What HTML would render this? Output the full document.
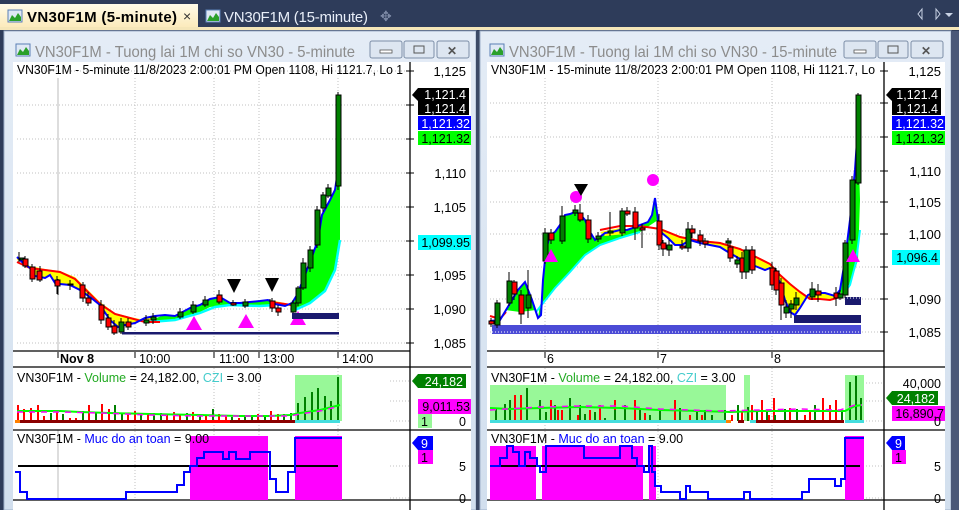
<!DOCTYPE html>
<html><head><meta charset="utf-8"><style>
html,body{margin:0;padding:0;width:959px;height:510px;overflow:hidden;background:#2e3c5a;}
svg{position:absolute;left:0;top:0;font-family:"Liberation Sans",sans-serif;}
</style></head><body>
<svg width="959" height="510" viewBox="0 0 959 510" xmlns="http://www.w3.org/2000/svg">
<defs>
<linearGradient id="tab" x1="0" y1="0" x2="0" y2="1"><stop offset="0" stop-color="#fffbe8"/><stop offset="1" stop-color="#fbe9b8"/></linearGradient>
<linearGradient id="frm" x1="0" y1="0" x2="0" y2="1"><stop offset="0" stop-color="#e4ecf6"/><stop offset="1" stop-color="#d2dfee"/></linearGradient>
</defs>
<rect x="0" y="0" width="959" height="29" fill="#2e3c5a"/>
<rect x="0" y="4" width="198" height="25" fill="url(#tab)"/>
<rect x="0" y="27" width="959" height="3" fill="#f5e6b8"/>
<rect x="0" y="30" width="959" height="480" fill="#2e3c5a"/>
<g>
<rect x="8" y="10" width="14" height="12" fill="#dfe8f5" stroke="#5a7fb5"/><path d="M9 21 L12 15 L15 18 L18 13 L21 17 L21 21Z" fill="#2aa02a"/>
<text x="27" y="22" font-size="15" font-weight="bold" fill="#000" textLength="150">VN30F1M (5-minute)</text>
<text x="183" y="21" font-size="14" fill="#333">×</text>
<rect x="206" y="10" width="14" height="12" fill="#dfe8f5" stroke="#5a7fb5"/><path d="M207 21 L210 15 L213 18 L216 13 L219 17 L219 21Z" fill="#2aa02a"/>
<text x="224" y="22" font-size="15" fill="#e8eef8" textLength="144">VN30F1M (15-minute)</text>
<text x="380" y="21" font-size="14" fill="#7d8aa6">✥</text>
<path d="M922 9 L918 14 L922 19Z" fill="none" stroke="#c8d2e4"/><path d="M936 9 L940 14 L936 19Z" fill="none" stroke="#c8d2e4"/><path d="M945 13 L953 13 L949 17Z" fill="#c8d2e4"/>
</g>
<rect x="4" y="31" width="472" height="479" fill="url(#frm)" stroke="#9fb1c9"/>
<rect x="13" y="62" width="458" height="448" fill="#fff"/>
<rect x="16" y="44" width="14" height="12" fill="#dfe8f5" stroke="#5a7fb5"/><path d="M17 55 L20 49 L23 52 L26 47 L29 51 L29 55Z" fill="#2aa02a"/>
<text x="35" y="57" font-size="16" fill="#8c8c8c" textLength="320" lengthAdjust="spacingAndGlyphs">VN30F1M - Tuong lai 1M chi so VN30 - 5-minute</text>
<g fill="#dde6f1" stroke="#7d8fa8"><rect x="370" y="41" width="32" height="17" rx="2"/><rect x="404" y="41" width="30" height="17" rx="2"/><rect x="437" y="41" width="32" height="17" rx="2"/></g>
<rect x="380" y="50" width="12" height="3" fill="#fff" stroke="#555" stroke-width=".8"/><rect x="414" y="46" width="10" height="7" fill="none" stroke="#555"/><text x="447" y="55" font-size="12" fill="#555" font-weight="bold">✕</text>
<rect x="476" y="31" width="4" height="479" fill="#3c4a66"/>
<rect x="480" y="31" width="471" height="479" fill="url(#frm)" stroke="#9fb1c9"/>
<rect x="951" y="31" width="8" height="479" fill="#4a5878"/>
<rect x="487" y="62" width="458" height="448" fill="#fff"/>
<rect x="490" y="44" width="14" height="12" fill="#dfe8f5" stroke="#5a7fb5"/><path d="M491 55 L494 49 L497 52 L500 47 L503 51 L503 55Z" fill="#2aa02a"/>
<text x="509" y="57" font-size="16" fill="#8c8c8c" textLength="328" lengthAdjust="spacingAndGlyphs">VN30F1M - Tuong lai 1M chi so VN30 - 15-minute</text>
<g fill="#dde6f1" stroke="#7d8fa8"><rect x="844" y="41" width="32" height="17" rx="2"/><rect x="878" y="41" width="30" height="17" rx="2"/><rect x="911" y="41" width="32" height="17" rx="2"/></g>
<rect x="854" y="50" width="12" height="3" fill="#fff" stroke="#555" stroke-width=".8"/><rect x="888" y="46" width="10" height="7" fill="none" stroke="#555"/><text x="921" y="55" font-size="12" fill="#555" font-weight="bold">✕</text>

<!-- LEFT CHART -->
<g stroke="#c0c0c0" stroke-dasharray="1,2" stroke-width="1">
<path d="M17 105H410M17 139H410M17 173H410M17 207H410M17 241H410M17 275H410M17 309H410M17 343H410M17 71H410"/>
<path d="M135 78V350M214 78V350M259 78V350M338 78V350"/>
<path d="M135 368V500M214 368V500M259 368V500M338 368V500"/>
<path d="M390 381H410M390 401H410M390 421H410M390 466H410M390 498H410"/>
</g>
<path d="M58 78V350M58 430V500" stroke="#bbb"/>
<path d="M410 62V510M13 351H410M13 367H471M13 430H471M13 500H471" stroke="#000" stroke-width="1.3"/>
<path d="M406 71H414M406 105H414M406 139H414M406 173H414M406 207H414M406 241H414M406 275H414M406 309H414M406 343H414" stroke="#000"/>
<text x="17" y="74" font-size="12.5" fill="#000" textLength="386" lengthAdjust="spacingAndGlyphs">VN30F1M - 5-minute 11/8/2023 2:00:01 PM Open 1108, Hi 1121.7, Lo 1</text>
<g font-size="13" fill="#000" text-anchor="end"><text x="466" y="76">1,125</text><text x="466" y="178">1,110</text><text x="466" y="212">1,105</text><text x="466" y="280">1,095</text><text x="466" y="314">1,090</text><text x="466" y="348">1,085</text></g>
<polygon points="17,260 30,266 45,269 60,271 75,277 85,287 100,302 115,313 130,317 145,320 160,321 160,318 145,318 135,322 125,324 118,327 110,320 100,305 90,297 80,290 70,285 60,284 55,283 50,275 45,278 35,276 30,268 22,262 17,257" fill="#ffff00"/>
<polygon points="150,320 165,315 175,316 190,308 200,305 210,299 220,297 230,303 240,303 250,302 260,301 268,300 275,304 260,305 240,306 225,305 210,307 198,313 180,318 165,322" fill="#00ff00"/>
<polygon points="270,300 285,303 292,306 285,306 275,304" fill="#ffff00"/>
<polygon points="292,305 297,295 303,280 310,262 318,240 322,215 330,200 335,190 340,180 340,240 335,268 325,290 310,302 296,308" fill="#00ff00"/>
<polyline points="150,322 175,320 200,313 215,307 230,305 260,306 275,305" fill="none" stroke="#00ffff" stroke-width="2.5"/>
<polyline points="295,310 310,303 325,291 335,270 340,240" fill="none" stroke="#00ffff" stroke-width="2.5"/>
<polyline points="17,262 30,268 45,270 60,272 75,279 85,289 100,304 115,314 130,318 145,322 160,322" fill="none" stroke="#ff0000" stroke-width="2"/>
<polyline points="270,302 285,304 292,305" fill="none" stroke="#ff0000" stroke-width="2"/>
<polyline points="17,257 22,262 30,268 35,276 45,278 50,275 55,283 60,284 70,285 80,290 90,297 100,305 110,320 118,327 125,325 135,323 145,318 155,316 165,315 175,316 190,308 200,305 210,299 220,297 230,303 240,303 250,302 260,301 268,300 275,304 285,306 292,303 297,295 303,280 310,262 318,240 322,215 330,200 335,190 338,170 340,95" fill="none" stroke="#0000ff" stroke-width="2"/>
<g stroke="#000" stroke-width="1">
<path d="M19 252V262M25 256V268M32 264V282M40 266V282M57 276V294M58 279V295M70 280V290M83 282V302M88 292V306M101 300V324M108 314V330M114 320V335M121 318V334M128 318V330M146 315V326M153 313V324M180 308V319M193 301V314M205 296V307M219 290V304M233 300V306M245 299V308M270 299V305M272 298V312M278 305V316M293 300V313M298 286V306M303 258V290M310 246V272M317 206V248M323 192V212M328 184V198M338 92V190"/>
</g>
<g stroke="#000" stroke-width="1">
<rect x="20" y="258" width="5" height="2" fill="#008000"/>
<rect x="23" y="259" width="5" height="7" fill="#ff0000"/>
<rect x="30" y="267" width="5" height="12" fill="#ff0000"/>
<rect x="37" y="271" width="5" height="9" fill="#ff0000"/>
<rect x="55" y="280" width="5" height="6" fill="#ff0000"/>
<rect x="68" y="284" width="5" height="1" fill="#ff0000"/>
<rect x="80" y="285" width="5" height="13" fill="#ff0000"/>
<rect x="86" y="298" width="5" height="5" fill="#ff0000"/>
<rect x="99" y="305" width="5" height="15" fill="#ff0000"/>
<rect x="106" y="318" width="5" height="9" fill="#ff0000"/>
<rect x="112" y="326" width="5" height="7" fill="#ff0000"/>
<rect x="119" y="322" width="5" height="10" fill="#008000"/>
<rect x="126" y="322" width="5" height="5" fill="#ff0000"/>
<rect x="144" y="320" width="5" height="3" fill="#008000"/>
<rect x="151" y="317" width="5" height="3" fill="#008000"/>
<rect x="178" y="312" width="5" height="5" fill="#008000"/>
<rect x="191" y="305" width="5" height="7" fill="#008000"/>
<rect x="203" y="300" width="5" height="5" fill="#008000"/>
<rect x="217" y="295" width="5" height="7" fill="#ff0000"/>
<rect x="231" y="303" width="5" height="2" fill="#ff0000"/>
<rect x="243" y="302" width="5" height="4" fill="#008000"/>
<rect x="270" y="301" width="5" height="7" fill="#ff0000"/>
<rect x="276" y="308" width="5" height="4" fill="#ff0000"/>
<rect x="291" y="303" width="5" height="9" fill="#008000"/>
<rect x="296" y="288" width="5" height="15" fill="#008000"/>
<rect x="301" y="263" width="5" height="25" fill="#008000"/>
<rect x="308" y="250" width="5" height="18" fill="#008000"/>
<rect x="315" y="210" width="5" height="35" fill="#008000"/>
<rect x="321" y="195" width="5" height="13" fill="#008000"/>
<rect x="326" y="188" width="5" height="8" fill="#008000"/>
<rect x="336" y="95" width="5" height="91" fill="#008000"/>
</g>
<g fill="#ff00ff"><path d="M194 316L202 330H186Z"/><path d="M246 314L254 328H238Z"/><path d="M298 311L306 325H290Z"/></g>
<g fill="#000"><path d="M227 279H241L234 293Z"/><path d="M265 278H279L272 292Z"/></g>
<rect x="292" y="313" width="47" height="6" fill="#1a1a6e"/>
<rect x="122" y="332" width="217" height="2.5" fill="#1a1a6e"/>
<path d="M412 95L418 88H469V101H418Z" fill="#000"/><text x="466" y="99" font-size="12.5" fill="#fff" text-anchor="end">1,121.4</text>
<rect x="418" y="101" width="51" height="14" fill="#000"/><text x="466" y="113" font-size="12.5" fill="#fff" text-anchor="end">1,121.4</text>
<rect x="418" y="116" width="53" height="14" fill="#0000ff"/><text x="470" y="128" font-size="12.5" fill="#fff" text-anchor="end">1,121.32</text>
<rect x="418" y="131" width="53" height="14" fill="#00ff00"/><text x="470" y="143" font-size="12.5" fill="#000" text-anchor="end">1,121.32</text>
<rect x="418" y="235" width="53" height="15" fill="#00ffff"/><text x="470" y="247" font-size="12.5" fill="#000" text-anchor="end">1,099.95</text>
<g font-size="12.5" fill="#000"><text x="60" y="363" font-weight="bold">Nov 8</text><text x="139" y="363">10:00</text><text x="219" y="363">11:00</text><text x="263" y="363">13:00</text><text x="342" y="363">14:00</text></g>
<path d="M58 352V358M135 352V358M214 352V358M259 352V358M338 352V358" stroke="#000"/>
<rect x="295" y="375" width="47" height="46" fill="#98f898"/>
<text x="17" y="382" font-size="12.5" fill="#000">VN30F1M - <tspan fill="#22aa22">Volume</tspan> = 24,182.00, <tspan fill="#44cccc">CZI</tspan> = 3.00</text>
<path d="M18 421V405M24 421V409M31 421V408M38 421V405M44 421V416M57 421V411M70 421V418M76 421V418M89 421V405M102 421V404M109 421V409M128 421V413M135 421V411M148 421V414M167 421V415M174 421V412M180 421V415M193 421V412M206 421V415M219 421V414M226 421V416M239 421V418M258 421V414M271 421V411M278 421V414" stroke="#ff0000" stroke-width="2"/>
<path d="M51 421V413M63 421V414M83 421V411M96 421V412M115 421V405M122 421V414M141 421V414M154 421V413M161 421V413M187 421V413M200 421V415M213 421V409M232 421V417M245 421V415M252 421V417M265 421V415M284 421V414M291 421V413M298 421V403M305 421V397M312 421V392M318 421V388M325 421V396M331 421V401M338 421V377" stroke="#008000" stroke-width="2"/>
<rect x="15" y="420" width="280" height="3" fill="#8b0000"/><rect x="15" y="420" width="5" height="3" fill="#ff8000"/><rect x="200" y="420" width="30" height="3" fill="#ff0000"/><rect x="295" y="420" width="45" height="3" fill="#44dddd"/>
<polyline points="17,411 60,411 80,412 110,413 150,414 200,415 240,416 270,416 290,415 300,413 320,410 340,405" fill="none" stroke="#00ff00" stroke-width="2"/>
<polyline points="17,412 60,412 100,413 150,415 200,416 260,416 290,416 300,414 320,411 340,406" fill="none" stroke="#ff00ff" stroke-width="1.5" stroke-dasharray="6,6"/>
<path d="M412 381L418 374H466V388H418Z" fill="#008000"/><text x="463" y="386" font-size="12.5" fill="#fff" text-anchor="end">24,182</text>
<rect x="418" y="399" width="53" height="15" fill="#ff00ff"/><text x="470" y="411" font-size="12.5" fill="#000" text-anchor="end">9,011.53</text>
<rect x="418" y="414" width="14" height="14" fill="#98f898"/><text x="421" y="426" font-size="12.5" fill="#000">1</text>
<text x="466" y="426" font-size="12.5" fill="#000" text-anchor="end">0</text>
<rect x="190" y="436" width="78" height="64" fill="#ff00ff"/><rect x="295" y="436" width="47" height="64" fill="#ff00ff"/>
<text x="17" y="443" font-size="12.5" fill="#000">VN30F1M - <tspan fill="#0000ff">Muc do an toan</tspan> = 9.00</text>
<path d="M18 466H338" stroke="#000" stroke-width="2"/>
<polyline points="15,472 20,472 20,492 27,492 27,499 126,499 126,492 177,492 177,485 184,485 184,472 190,472 190,466 197,466 197,458 204,458 204,452 223,452 223,459 229,459 229,452 236,452 236,459 250,459 250,452 270,452 270,479 276,479 276,492 288,492 288,472 295,472 295,438 342,438" fill="none" stroke="#0000ff" stroke-width="2"/>
<path d="M412 443L418 436H433V450H418Z" fill="#0000ff"/><text x="421" y="448" font-size="12.5" fill="#fff">9</text>
<rect x="418" y="450" width="15" height="14" fill="#ff00ff"/><text x="421" y="462" font-size="12.5" fill="#000">1</text>
<text x="466" y="471" font-size="12.5" fill="#000" text-anchor="end">5</text><text x="466" y="503" font-size="12.5" fill="#000" text-anchor="end">0</text>

<!-- RIGHT CHART -->
<g stroke="#c0c0c0" stroke-dasharray="1,2" stroke-width="1">
<path d="M490 103H884M490 137H884M490 171H884M490 202H884M490 234H884M490 267H884M490 299H884M490 332H884"/>
<path d="M545 78V350M658 78V350M772 78V350M545 368V500M658 368V500M772 368V500"/>
<path d="M860 383H884M860 401H884M860 421H884M860 466H884M860 498H884"/>
</g>
<path d="M884 62V510M487 351H884M487 367H945M487 430H945M487 500H945" stroke="#000" stroke-width="1.3"/>
<path d="M880 71H888M880 103H888M880 137H888M880 171H888M880 202H888M880 234H888M880 267H888M880 299H888M880 332H888" stroke="#000"/>
<text x="491" y="74" font-size="12.5" fill="#000" textLength="384" lengthAdjust="spacingAndGlyphs">VN30F1M - 15-minute 11/8/2023 2:00:01 PM Open 1108, Hi 1121.7, Lo</text>
<g font-size="13" fill="#000" text-anchor="end"><text x="941" y="76">1,125</text><text x="941" y="176">1,110</text><text x="941" y="207">1,105</text><text x="941" y="239">1,100</text><text x="941" y="304">1,090</text><text x="941" y="337">1,085</text></g>
<rect x="492" y="325" width="369" height="9" fill="#4b4bd6"/><path d="M492 332H861" stroke="#fff" stroke-dasharray="1,2"/>
<rect x="794" y="315" width="67" height="8" fill="#1a1a6e"/>
<rect x="845" y="297" width="16" height="8" fill="#1a1a6e"/><path d="M847 298H860" stroke="#fff" stroke-dasharray="1,2"/>
<polygon points="538,318 541,315 543,280 546,250 550,235 555,232 560,225 565,215 570,214 575,212 580,214 585,220 590,232 595,240 600,237 605,233 612,232 620,230 627,230 633,228 640,225 648,222 652,215 655,198 658,220 640,232 620,238 600,245 585,255 570,272 555,288 540,305" fill="#00ff00"/>
<polygon points="505,310 512,300 518,290 525,282 532,300 536,310 520,312" fill="#00ff00"/>
<polygon points="658,227 680,236 700,240 720,242 740,248 760,258 770,263 780,274 790,283 800,291 810,298 820,298 830,299 838,296 835,296 825,293 815,292 808,295 800,308 795,315 790,312 785,300 780,283 775,272 770,268 765,270 755,266 745,262 735,256 728,252 720,247 710,245 700,243 690,240 682,245 675,245 668,238 662,233" fill="#ffff00"/>
<polygon points="600,232 620,228 625,234 605,236" fill="#ffff00"/>
<polygon points="840,290 845,260 850,220 855,170 858,130 860,200 858,260 850,285 842,296" fill="#00ff00"/>
<polyline points="536,312 555,288 570,272 585,255 600,245 620,238 640,232" fill="none" stroke="#00ffff" stroke-width="2"/>
<polyline points="842,296 850,285 856,262 860,230" fill="none" stroke="#00ffff" stroke-width="2"/>
<polyline points="490,316 500,319 506,312" fill="none" stroke="#ff0000" stroke-width="2"/>
<polyline points="600,230 620,226 640,226 660,229 680,237 700,241 720,243 740,249 760,259 770,264 780,275 790,284 800,292 810,299 820,299 830,300 840,297" fill="none" stroke="#ff0000" stroke-width="2"/>
<polyline points="490,321 500,320 506,310 512,300 518,290 525,282 532,300 538,318 541,315 543,280 546,250 550,235 555,232 560,225 565,215 570,214 575,212 580,214 585,220 590,232 595,240 600,237 605,233 612,232 620,230 627,230 633,228 640,225 648,222 652,215 655,198 658,220 662,233 668,238 675,245 682,245 690,240 700,243 710,245 720,247 728,252 735,256 745,262 755,266 765,270 770,268 775,272 780,283 785,300 790,312 795,315 800,308 808,295 815,292 820,293 825,293 835,296 840,290 845,260 850,220 855,170 860,95" fill="none" stroke="#0000ff" stroke-width="2"/>
<g stroke="#000" stroke-width="1">
<path d="M491 318V327M497 300V328M509 272V306M514 280V300M521 290V324M528 270V318M545 228V264M551 229V244M562 206V244M575 205V216M580 204V222M588 215V243M598 232V242M610 212V236M622 208V236M627 207V216M635 207V240M642 224V248M659 214V250M663 240V256M669 240V256M682 240V250M688 222V252M692 225V238M700 230V246M705 238V248M728 238V246M730 242V262M737 256V268M742 252V279M746 246V279M752 246V274M772 262V290M776 268V295M781 278V320M786 300V318M791 300V318M796 292V310M812 282V300M818 284V302M836 287V306M840 290V300M845 240V298M852 176V244M858 93V185"/>
</g>
<g stroke="#000" stroke-width="1">
<rect x="489" y="321" width="5" height="3" fill="#ff0000"/><rect x="495" y="303" width="5" height="22" fill="#008000"/><rect x="507" y="281" width="5" height="22" fill="#008000"/><rect x="512" y="282" width="5" height="12" fill="#ff0000"/><rect x="519" y="295" width="5" height="19" fill="#ff0000"/><rect x="526" y="295" width="5" height="13" fill="#008000"/>
<rect x="543" y="233" width="5" height="28" fill="#008000"/><rect x="549" y="233" width="5" height="7" fill="#ff0000"/><rect x="560" y="216" width="5" height="25" fill="#008000"/><rect x="573" y="210" width="5" height="3" fill="#008000"/><rect x="578" y="213" width="5" height="7" fill="#ff0000"/><rect x="586" y="220" width="5" height="19" fill="#ff0000"/><rect x="596" y="236" width="5" height="3" fill="#008000"/><rect x="608" y="231" width="5" height="2" fill="#008000"/><rect x="620" y="211" width="5" height="22" fill="#008000"/><rect x="625" y="211" width="5" height="3" fill="#ff0000"/><rect x="633" y="212" width="5" height="16" fill="#ff0000"/><rect x="640" y="228" width="5" height="2" fill="#ff0000"/>
<rect x="657" y="221" width="5" height="24" fill="#ff0000"/><rect x="661" y="243" width="5" height="6" fill="#ff0000"/><rect x="667" y="245" width="5" height="5" fill="#008000"/><rect x="680" y="246" width="5" height="2" fill="#ff0000"/><rect x="686" y="229" width="5" height="19" fill="#008000"/><rect x="690" y="229" width="5" height="4" fill="#ff0000"/><rect x="698" y="235" width="5" height="6" fill="#ff0000"/><rect x="703" y="241" width="5" height="3" fill="#ff0000"/><rect x="726" y="241" width="5" height="2" fill="#008000"/><rect x="728" y="247" width="5" height="11" fill="#ff0000"/><rect x="735" y="260" width="5" height="4" fill="#008000"/><rect x="740" y="258" width="5" height="14" fill="#ff0000"/><rect x="744" y="250" width="5" height="22" fill="#008000"/><rect x="750" y="250" width="5" height="20" fill="#ff0000"/>
<rect x="770" y="268" width="5" height="17" fill="#ff0000"/><rect x="774" y="271" width="5" height="19" fill="#ff0000"/><rect x="779" y="283" width="5" height="22" fill="#ff0000"/><rect x="784" y="307" width="5" height="6" fill="#008000"/><rect x="789" y="304" width="5" height="5" fill="#008000"/><rect x="794" y="298" width="5" height="7" fill="#008000"/><rect x="810" y="289" width="5" height="8" fill="#008000"/><rect x="816" y="291" width="5" height="4" fill="#ff0000"/><rect x="834" y="293" width="5" height="5" fill="#ff0000"/><rect x="838" y="294" width="5" height="4" fill="#008000"/><rect x="843" y="243" width="5" height="52" fill="#008000"/><rect x="850" y="180" width="5" height="60" fill="#008000"/><rect x="856" y="95" width="5" height="88" fill="#008000"/>
</g>
<g fill="#ff00ff"><path d="M551 249L558 262H544Z"/><path d="M853 249L860 262H846Z"/><circle cx="576" cy="197" r="6"/><circle cx="653" cy="180" r="6"/></g>
<path d="M574 184H588L581 196Z" fill="#000"/>
<path d="M886 95L892 88H941V101H892Z" fill="#000"/><text x="938" y="99" font-size="12.5" fill="#fff" text-anchor="end">1,121.4</text>
<rect x="892" y="101" width="49" height="14" fill="#000"/><text x="938" y="113" font-size="12.5" fill="#fff" text-anchor="end">1,121.4</text>
<rect x="892" y="116" width="53" height="14" fill="#0000ff"/><text x="944" y="128" font-size="12.5" fill="#fff" text-anchor="end">1,121.32</text>
<rect x="892" y="131" width="53" height="14" fill="#00ff00"/><text x="944" y="143" font-size="12.5" fill="#000" text-anchor="end">1,121.32</text>
<rect x="892" y="250" width="48" height="15" fill="#00ffff"/><text x="938" y="262" font-size="12.5" fill="#000" text-anchor="end">1,096.4</text>
<g font-size="12.5" fill="#000"><text x="547" y="363">6</text><text x="660" y="363">7</text><text x="774" y="363">8</text></g>
<path d="M545 352V358M658 352V358M772 352V358" stroke="#000"/>
<rect x="490" y="385" width="236" height="36" fill="#98f898"/><rect x="744" y="375" width="6" height="46" fill="#98f898"/><rect x="845" y="375" width="19" height="46" fill="#98f898"/>
<text x="491" y="382" font-size="12.5" fill="#000">VN30F1M - <tspan fill="#22aa22">Volume</tspan> = 24,182.00, <tspan fill="#44cccc">CZI</tspan> = 3.00</text>
<path d="M515 421V395M521 421V395M540 421V405M551 421V400M558 421V410M562 421V410M578 421V415M590 421V410M600 421V405M615 421V400M635 421V400M645 421V413M660 421V413M675 421V400M690 421V415M702 421V415M732 421V415M742 421V412M752 421V405M762 421V400M769 421V415M774 421V398M790 421V408M805 421V415M810 421V410M823 421V398M830 421V405M836 421V400" stroke="#ff0000" stroke-width="2"/>
<path d="M496 421V408M505 421V404M510 421V400M527 421V388M540 421V400M546 421V412M555 421V405M570 421V398M580 421V405M585 421V414M595 421V412M605 421V418M615 421V410M625 421V405M640 421V410M650 421V415M660 421V410M680 421V408M697 421V412M705 421V410M712 421V415M725 421V410M738 421V405M748 421V407M757 421V410M767 421V410M775 421V415M785 421V409M797 421V409M815 421V405M842 421V412M850 421V382M856 421V376M861 421V398" stroke="#008000" stroke-width="2"/>
<rect x="490" y="420" width="236" height="3" fill="#44dddd"/><rect x="726" y="420" width="5" height="3" fill="#ff8000"/><rect x="738" y="420" width="6" height="3" fill="#8b0000"/><rect x="750" y="420" width="6" height="3" fill="#44dddd"/><rect x="756" y="420" width="88" height="3" fill="#8b0000"/><rect x="845" y="420" width="19" height="3" fill="#44dddd"/>
<polyline points="490,408 510,409 540,408 580,407 620,408 660,410 700,411 730,412 760,411 800,411 830,411 845,411 855,406 862,405" fill="none" stroke="#00ff00" stroke-width="2"/>
<polyline points="490,410 540,407 580,406 620,406 660,409 720,411 760,410 800,409 840,410 855,405 862,405" fill="none" stroke="#ff00ff" stroke-width="1.5" stroke-dasharray="6,6"/>
<text x="941" y="388" font-size="12.5" fill="#000" text-anchor="end">40,000</text>
<path d="M886 398L892 391H938V405H892Z" fill="#008000"/><text x="935" y="403" font-size="12.5" fill="#fff" text-anchor="end">24,182</text>
<rect x="892" y="406" width="53" height="15" fill="#ff00ff"/><text x="944" y="418" font-size="12.5" fill="#000" text-anchor="end">16,890.7</text>
<text x="941" y="426" font-size="12.5" fill="#000" text-anchor="end">0</text>
<rect x="490" y="446" width="46" height="54" fill="#ff00ff"/><rect x="542" y="446" width="101" height="54" fill="#ff00ff"/><rect x="649" y="446" width="7" height="54" fill="#ff00ff"/><rect x="845" y="436" width="19" height="64" fill="#ff00ff"/>
<text x="491" y="443" font-size="12.5" fill="#000">VN30F1M - <tspan fill="#0000ff">Muc do an toan</tspan> = 9.00</text>
<path d="M490 466H860" stroke="#000" stroke-width="2"/>
<polyline points="490,466 500,466 500,458 507,458 507,446 513,446 513,452 519,452 519,466 525,466 525,452 530,452 530,458 537,458 537,466 540,466 540,472 546,472 546,446 584,446 584,458 620,458 620,446 632,446 632,458 637,458 637,466 644,466 644,472 649,472 649,446 652,446 652,472 655,472 655,486 661,486 661,492 680,492 680,499 686,499 686,486 690,486 690,492 708,492 708,499 744,499 744,492 750,492 750,499 802,499 802,492 809,492 809,479 835,479 835,486 841,486 841,479 845,479 845,438 864,438" fill="none" stroke="#0000ff" stroke-width="2"/>
<path d="M886 443L892 436H905V450H892Z" fill="#0000ff"/><text x="895" y="448" font-size="12.5" fill="#fff">9</text>
<rect x="892" y="450" width="14" height="14" fill="#ff00ff"/><text x="895" y="462" font-size="12.5" fill="#000">1</text>
<text x="941" y="471" font-size="12.5" fill="#000" text-anchor="end">5</text><text x="941" y="503" font-size="12.5" fill="#000" text-anchor="end">0</text>
</svg>
</body></html>
